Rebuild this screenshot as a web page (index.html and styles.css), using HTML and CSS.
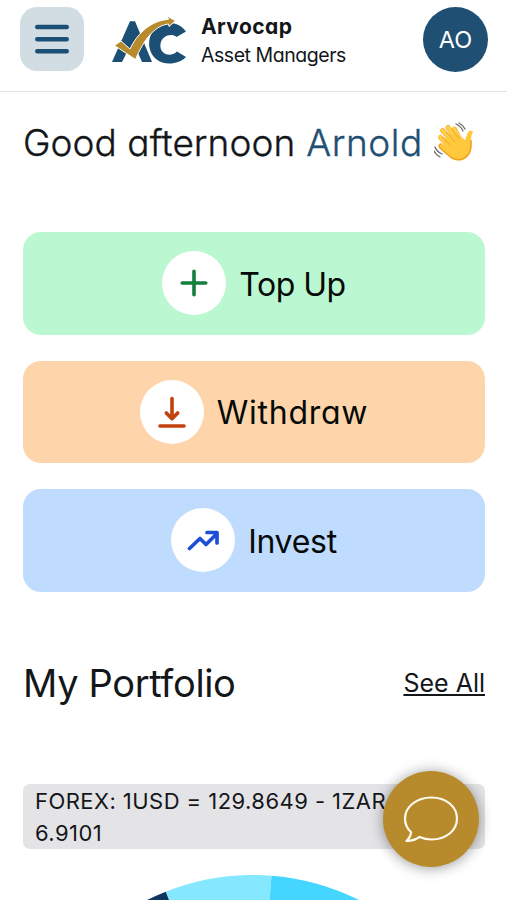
FILE: index.html
```html
<!DOCTYPE html>
<html lang="en">
<head>
<meta charset="utf-8">
<meta name="viewport" content="width=device-width, initial-scale=1">
<title>Arvocap Asset Managers</title>
<link rel="stylesheet" href="styles.css">
</head>
<body>
<div class="app">
  <header class="topbar">
    <button class="menu" aria-label="Menu">
      <svg width="34" height="30" viewBox="0 0 34 30"><path d="M2.300 3H31.700M2.300 15.200H31.700M2.300 27.200H31.700" stroke="#1b4f75" stroke-width="4.600" stroke-linecap="round"/></svg>
    </button>
    <div class="brand">
      <svg class="logo" width="76" height="48" viewBox="0 0 76 48">
        <path d="M18 5.300H23L40 46H30L26.500 38H14L10 46H0Z" fill="#1b4f75"/>
        <path d="M74 15.500L64.500 21C60 17 50 19 48.500 28C47 38 58 42 65 35.500L74 41C67 48.500 52 50 44 43C33 33 36 15 48 9C58 4.500 69 8 74 15.500Z" fill="#1b4f75"/>
        <path d="M2.500 29.500L9 25L18 33C25 18 38 5 56.500 3.300L55 0L63.500 4.800L57 10.500L56.500 8C43 9.500 32 23 23.500 43.500Z" fill="#b78b2b" stroke="#fff" stroke-width="1"/>
      </svg>
      <div class="brand-name"><strong>Arvocap</strong><span>Asset Managers</span></div>
    </div>
    <div class="avatar">AO</div>
  </header>
  <main>
    <h1 class="greeting"><span class="hello">Good afternoon</span><span class="name">Arnold</span>
      <svg width="41" height="41" viewBox="0 0 41 41" fill="none">
        <g stroke-linecap="round">
          <path d="M15 24L6.500 15.500M19 20L8.500 8.500M23 18L14 5.500M26 18L20.500 7" stroke="#f5b52d" stroke-width="5"/>
          <path d="M15 24L6.500 15.500M19 20L8.500 8.500M23 18L14 5.500M26 18L20.500 7" stroke="#ffcf4a" stroke-width="3.600"/>
        </g>
        <path d="M7 21Q4 22 5 25L17 36Q26 42 34 34C39 29 37 22 37 17Q37 13 39 10Q37 7 34 10L31 18L23 11L10 17L12 24Z" fill="#ffc83d"/>
        <path d="M7 22Q4 23 6 26L17 35.500Q27 41 34 33C38 28 37 22 37 18" stroke="#eea323" stroke-width="1.500"/>
        <path d="M8 15L16 23M12 10L21 20M18 8L25 17" stroke="#e9a52a" stroke-width="1"/>
        <path d="M22 2Q27 4 29 9M25 1Q29 3 31 7M1 25Q3 30 8 32M0 29Q2 33 6 35" stroke="#666" stroke-width="1.300" stroke-linecap="round"/>
      </svg>
    </h1>
    <nav class="actions">
      <button class="action topup"><span class="disc"><svg width="28" height="28" viewBox="0 0 28 28"><path d="M14 2.200V25.800M2.200 14H25.800" stroke="#15803d" stroke-width="3.600" stroke-linecap="round"/></svg></span><span class="label">Top Up</span></button>
      <button class="action withdraw"><span class="disc"><svg width="28" height="32" viewBox="0 0 28 32" fill="none"><path d="M14 2.500V22M8.300 17L14 22.700L19.700 17M2 30H26" stroke="#c2410c" stroke-width="3.600" stroke-linecap="round" stroke-linejoin="round"/></svg></span><span class="label">Withdraw</span></button>
      <button class="action invest"><span class="disc"><svg width="32" height="22" viewBox="0 0 32 22" fill="none"><path d="M2.500 19.500L13 9.500L19 15.500L29.500 5M20 3.500H30V14" stroke="#1d4ed8" stroke-width="3.700" stroke-linecap="round" stroke-linejoin="round"/></svg></span><span class="label">Invest</span></button>
    </nav>
    <section class="portfolio">
      <div class="section-head"><h2>My Portfolio</h2><a href="#">See All</a></div>
      <div class="forex">FOREX: 1USD = 129.8649 - 1ZAR = 6.9101</div>
      <svg class="chart" width="474" height="474" viewBox="-237 -237 474 474">
        <path d="M0 0L-87.300 -220.300A237 237 0 0 1 18.500 -236.300Z" fill="#85e8ff"/>
        <path d="M0 0L18.500 -236.300A237 237 0 0 1 237 0Z" fill="#45d6ff"/>
        <path d="M0 0L-237 0A237 237 0 0 1 -87.300 -220.300Z" fill="#0d3560"/>
      </svg>
    </section>
  </main>
  <button class="chat" aria-label="Chat">
    <svg width="56" height="46" viewBox="0 0 56 46" fill="none"><path d="M28.500 1.500C43 1.500 54 10.500 54 22.500C54 34.500 43 43.500 28.500 43.500C24 43.500 20 42.500 16.500 41C13 43.500 8 45 3.500 45C6.500 42 8 39 8 36C4 32.500 2 27.500 2 22.500C2 10.500 14 1.500 28.500 1.500Z" stroke="#fffaf0" stroke-width="2.200" stroke-linejoin="round"/></svg>
  </button>
</div>
</body>
</html>
```
FILE: styles.css
```css
* { box-sizing: border-box; }
body { margin: 0; background: #fff; color: #14171a; font-family: Inter, "Open Sans", sans-serif; font-feature-settings: "cv11", "ss03"; }
button { border: 0; padding: 0; font: inherit; color: inherit; font-feature-settings: inherit; }
svg { display: block; flex: none; }
.app { position: relative; height: 900px; overflow: hidden; }
.topbar { display: flex; align-items: flex-start; height: 92px; padding: 7px 19px 0 20px; border-bottom: 1.500px solid #e4e4e5; }
.menu { display: grid; place-items: center; width: 64px; height: 64px; border-radius: 17px; background: #d2dce3; }
.brand { display: flex; flex: 1; padding-left: 28px; }
.logo { margin-top: 9px; overflow: visible; }
.brand-name { display: flex; flex-direction: column; margin-left: 13px; padding-top: 6px; font-size: 19.500px; line-height: 28px; letter-spacing: -.45px; white-space: nowrap; }
.brand-name strong { font-size: 21px; font-weight: 700; letter-spacing: .4px; }
.avatar { display: grid; place-items: center; width: 65px; height: 65px; border-radius: 50%; background: #1f5073; color: #fff; font-size: 23.500px; }
main { padding: 0 22px 0 23px; }
h1, h2 { margin: 0; font-weight: 400; white-space: nowrap; }
.greeting { display: flex; align-items: center; height: 60px; margin-top: 20px; font-size: 37px; font-weight: 300; -webkit-text-stroke: .35px currentColor; letter-spacing: .05px; }
.name { margin: 0 11px; color: #1f5073; letter-spacing: .55px; }
.actions { display: grid; gap: 26px; margin-top: 60px; }
.action { display: flex; align-items: center; justify-content: center; gap: 13px; height: 102.500px; border-radius: 18px; color: #060a08; font-size: 32px; }
.label { padding-top: 2px; }
.disc { display: grid; place-items: center; width: 64px; height: 64px; border-radius: 50%; background: #fff; }
.topup { background: #bbf7d0; letter-spacing: -.5px; }
.withdraw { background: #fed5aa; letter-spacing: .75px; }
.invest { background: #bfdbfe; letter-spacing: -.3px; }
.section-head { display: flex; justify-content: space-between; align-items: center; height: 60px; margin-top: 61px; }
h2 { font-size: 38px; letter-spacing: -.35px; }
.section-head a { color: inherit; font-size: 25px; text-decoration-thickness: 2px; text-underline-offset: 1.500px; }
.forex { height: 65px; margin-top: 71px; padding: 1px 13px 0 12px; border-radius: 7px; background: #e4e4e7; font-size: 22px; line-height: 32px; letter-spacing: .45px; }
.chart { margin: 26px auto 0 -7px; }
.chat { position: absolute; left: 383px; top: 771px; display: grid; place-items: center; width: 96px; height: 96px; border-radius: 50%; background: #b78b2b; box-shadow: 0 1px 14px rgba(0,0,0,.4); }
```
